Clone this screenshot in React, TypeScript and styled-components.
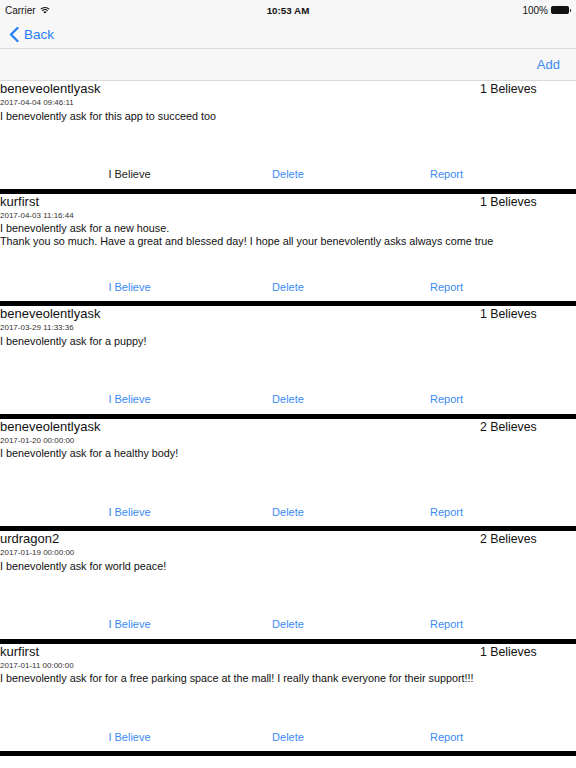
import React from "react";
import styled, { createGlobalStyle } from "styled-components";

const GlobalStyle = createGlobalStyle`
  html, body {
    margin: 0;
    padding: 0;
    background: #ffffff;
    font-family: "Liberation Sans", Arial, sans-serif;
    -webkit-font-smoothing: antialiased;
  }
`;

const blue = "#1f7ef8";
const lightBlue = "#3a8af6";

const Screen = styled.div`
  width: 576px;
  height: 768px;
  overflow: hidden;
  background: #ffffff;
`;

const Chrome = styled.div`
  background: #f7f7f7;
`;

const StatusBar = styled.div`
  height: 20px;
  display: grid;
  grid-template-columns: 1fr auto 1fr;
  align-items: center;
  padding: 0 5px;
  font-size: 10px;
  color: #111;

  .left {
    display: flex;
    align-items: center;
    gap: 4px;
  }
  .time {
    font-weight: bold;
    font-size: 9.8px;
  }
  .right {
    display: flex;
    align-items: center;
    justify-content: flex-end;
    gap: 3px;
  }
`;

const Battery = styled.div`
  position: relative;
  width: 16px;
  height: 6px;
  border: 1px solid #111;
  border-radius: 1.5px;
  margin-right: 2px;
  background: #111;

  &::after {
    content: "";
    position: absolute;
    right: -3px;
    top: 1.5px;
    width: 1.5px;
    height: 3px;
    background: #111;
    border-radius: 0 1px 1px 0;
  }
`;

const NavBar = styled.div`
  height: 28px;
  display: flex;
  align-items: center;
  padding-left: 9px;
  border-bottom: 1px solid #d9d9d9;
`;

const BackButton = styled.div`
  display: flex;
  align-items: center;
  gap: 5px;
  color: ${blue};
  font-size: 13.5px;
  padding-top: 1px;
`;

const Toolbar = styled.div`
  height: 31px;
  display: flex;
  align-items: center;
  justify-content: flex-end;
  padding-right: 16px;
  border-bottom: 1px solid #d9d9d9;
  color: ${lightBlue};
  font-size: 13px;
`;

const Cell = styled.div`
  height: 107.5px;
  display: flex;
  flex-direction: column;
`;

const CellBody = styled.div`
  flex: 1;
  min-height: 0;
`;

const HeaderRow = styled.div`
  display: flex;
  align-items: baseline;
`;

const Username = styled.div`
  flex: 1;
  font-size: 13px;
  line-height: 15px;
  color: #111;
`;

const Count = styled.div`
  width: 96px;
  font-size: 12.3px;
  line-height: 15px;
  color: #111;
`;

const DateText = styled.div`
  font-size: 8px;
  line-height: 10px;
  margin-top: 1px;
  color: #333;
`;

const Message = styled.div`
  font-size: 10.8px;
  line-height: 12.5px;
  margin-top: 1.5px;
  color: #111;
  white-space: pre-line;
`;

const Actions = styled.div`
  height: 28px;
  padding-bottom: 1px;
  box-sizing: border-box;
  display: flex;
  justify-content: center;
  align-items: center;
`;

const Action = styled.div<{ $muted?: boolean }>`
  width: 158.5px;
  text-align: center;
  font-size: 11px;
  color: ${(p) => (p.$muted ? "#222" : lightBlue)};
`;

const Separator = styled.div`
  height: 5px;
  background: #000;
`;

type Ask = {
  user: string;
  date: string;
  text: string;
  count: number;
  believed?: boolean;
};

const asks: Ask[] = [
  {
    user: "beneveolentlyask",
    date: "2017-04-04 09:46:11",
    text: "I benevolently ask for this app to succeed too",
    count: 1,
    believed: true,
  },
  {
    user: "kurfirst",
    date: "2017-04-03 11:16:44",
    text: "I benevolently ask for a new house.\nThank you so much. Have a great and blessed day! I hope all your benevolently asks always come true",
    count: 1,
  },
  {
    user: "beneveolentlyask",
    date: "2017-03-29 11:33:36",
    text: "I benevolently ask for a puppy!",
    count: 1,
  },
  {
    user: "beneveolentlyask",
    date: "2017-01-20 00:00:00",
    text: "I benevolently ask for a healthy body!",
    count: 2,
  },
  {
    user: "urdragon2",
    date: "2017-01-19 00:00:00",
    text: "I benevolently ask for world peace!",
    count: 2,
  },
  {
    user: "kurfirst",
    date: "2017-01-11 00:00:00",
    text: "I benevolently ask for for a free parking space at the mall! I really thank everyone for their support!!!",
    count: 1,
  },
];

const WifiIcon = () => (
  <svg width="10" height="8" viewBox="0 0 10 8">
    <path d="M5 7.6 L3.4 5.9 A2.3 2.3 0 0 1 6.6 5.9 Z" fill="#111" />
    <path d="M2.3 4.8 A3.9 3.9 0 0 1 7.7 4.8" stroke="#111" strokeWidth="1.1" fill="none" />
    <path d="M0.8 3.2 A6 6 0 0 1 9.2 3.2" stroke="#111" strokeWidth="1.1" fill="none" />
  </svg>
);

const Chevron = () => (
  <svg width="10" height="15" viewBox="0 0 10 15">
    <path d="M8.5 1 L2 7.5 L8.5 14" stroke={blue} strokeWidth="2.2" fill="none" strokeLinecap="round" strokeLinejoin="round" />
  </svg>
);

const App: React.FC = () => {
  return (
    <Screen>
      <GlobalStyle />
      <Chrome>
        <StatusBar>
          <div className="left">
            <span>Carrier</span>
            <WifiIcon />
          </div>
          <div className="time">10:53 AM</div>
          <div className="right">
            <span>100%</span>
            <Battery />
          </div>
        </StatusBar>
        <NavBar>
          <BackButton>
            <Chevron />
            <span>Back</span>
          </BackButton>
        </NavBar>
        <Toolbar>Add</Toolbar>
      </Chrome>
      {asks.map((a, i) => (
        <React.Fragment key={i}>
          <Cell>
            <CellBody>
              <HeaderRow>
                <Username>{a.user}</Username>
                <Count>{a.count} Believes</Count>
              </HeaderRow>
              <DateText>{a.date}</DateText>
              <Message>{a.text}</Message>
            </CellBody>
            <Actions>
              <Action $muted={a.believed}>I Believe</Action>
              <Action>Delete</Action>
              <Action>Report</Action>
            </Actions>
          </Cell>
          <Separator />
        </React.Fragment>
      ))}
    </Screen>
  );
};

export default App;
